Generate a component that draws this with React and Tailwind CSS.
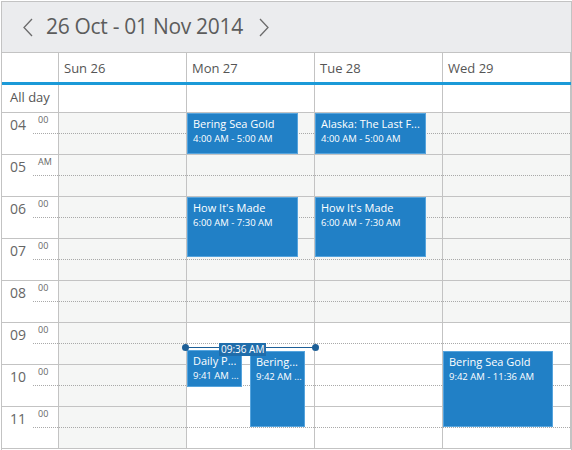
import React from 'react';

const days = [
  { label: 'Sun 26', weekend: true },
  { label: 'Mon 27' },
  { label: 'Tue 28' },
  { label: 'Wed 29' },
];

const hours = [
  { h: '04', m: '00' },
  { h: '05', m: 'AM' },
  { h: '06', m: '00' },
  { h: '07', m: '00' },
  { h: '08', m: '00' },
  { h: '09', m: '00' },
  { h: '10', m: '00' },
  { h: '11', m: '00' },
];

// top/left/width/height in px, relative to the day column body
const events = {
  1: [
    { title: 'Bering Sea Gold', time: '4:00 AM - 5:00 AM', top: 0, left: 0, w: 111, h: 41 },
    { title: "How It's Made", time: '6:00 AM - 7:30 AM', top: 84, left: 0, w: 111, h: 60 },
    { title: 'Daily P...', time: '9:41 AM ...', top: 237, left: 0, w: 55, h: 37 },
    { title: 'Bering...', time: '9:42 AM ...', top: 238, left: 63, w: 55, h: 76 },
  ],
  2: [
    { title: 'Alaska: The Last F...', time: '4:00 AM - 5:00 AM', top: 0, left: 0, w: 111, h: 41 },
    { title: "How It's Made", time: '6:00 AM - 7:30 AM', top: 84, left: 0, w: 111, h: 60 },
  ],
  3: [
    { title: 'Bering Sea Gold', time: '9:42 AM - 11:36 AM', top: 238, left: 0, w: 110, h: 76 },
  ],
};

const Chevron = ({ dir }) => (
  <svg width="12" height="19" viewBox="0 0 12 19" fill="none" stroke="#6b6b6b" strokeWidth="1.3">
    {dir === 'left' ? <path d="M10 1 L2 9.5 L10 18" /> : <path d="M2 1 L10 9.5 L2 18" />}
  </svg>
);

const Event = ({ ev }) => (
  <div
    className="absolute bg-[#2180c6] border border-[#56a4dd] text-white px-[5px] pt-[1px] overflow-hidden whitespace-nowrap"
    style={{ top: ev.top, left: ev.left, width: ev.w, height: ev.h }}
  >
    <div className="text-[11px] leading-[17px]">{ev.title}</div>
    <div className="text-[9.5px] leading-[14px]">{ev.time}</div>
  </div>
);

export default function App() {
  return (
    <div className="w-[572px] h-[450px] bg-white pl-px pt-px overflow-hidden font-['Open_Sans',sans-serif]">
      <div className="w-[571px] h-[449px] border-l border-t border-r border-[#c3c3c3] overflow-hidden">
        {/* toolbar */}
        <div className="h-[51px] bg-[#ebecee] border-b border-[#c3c3c3] flex items-center pl-[20px]">
          <Chevron dir="left" />
          <span className="ml-[12px] text-[21px] text-[#5c5c5c] tracking-[-0.3px]">26 Oct - 01 Nov 2014</span>
          <span className="ml-[15px]"><Chevron dir="right" /></span>
        </div>

        {/* day headers */}
        <div className="flex h-[29px]">
          <div className="w-[57px] border-r border-[#c3c3c3]" />
          {days.map((d) => (
            <div key={d.label} className="w-[128px] border-r border-[#c3c3c3] pl-[5px] pt-[7px] text-[13px] leading-[16px] text-[#555]">
              {d.label}
            </div>
          ))}
        </div>
        <div className="h-[3px] bg-[#1b9ad8]" />

        {/* all day */}
        <div className="flex h-[28px] border-b border-[#c3c3c3]">
          <div className="w-[57px] border-r border-[#c3c3c3] pl-[8px] pt-[3px] text-[13px] leading-[18px] text-[#555]">All day</div>
          {days.map((d) => (
            <div key={d.label} className="w-[128px] border-r border-[#c3c3c3]" />
          ))}
        </div>

        {/* time grid */}
        <div className="relative flex">
          <div className="w-[57px] border-r border-[#c3c3c3] flex flex-col">
            {hours.map((r) => (
              <div key={r.h} className="h-[42px] border-b border-[#c3c3c3] flex">
                <div className="w-[31px] pl-[8px] pt-[3px] text-[14px] leading-[18px] text-[#666]">{r.h}</div>
                <div className="flex-1 h-[21px] border-b border-dotted border-[#a9a9a9] pl-[5px] pt-px text-[9px] leading-[11px] text-[#666]">
                  {r.m}
                </div>
              </div>
            ))}
          </div>

          {days.map((d, i) => (
            <div key={d.label} className="relative w-[128px] border-r border-[#c3c3c3] flex flex-col">
              {hours.map((r, j) => {
                const shaded = d.weekend || j < 5;
                return (
                  <div key={r.h} className={`h-[42px] border-b border-[#c3c3c3] ${shaded ? 'bg-[#f5f6f5]' : 'bg-white'}`}>
                    <div className="h-[21px] border-b border-dotted border-[#a9a9a9]" />
                  </div>
                );
              })}
              {(events[i] || []).map((ev) => (
                <Event key={ev.title + ev.top} ev={ev} />
              ))}
            </div>
          ))}

          {/* current time marker */}
          <div className="absolute left-[183px] top-[234px] w-[131px] h-px bg-[#1d5f97]">
            <div className="absolute -left-[3px] -top-[3px] w-[7px] h-[7px] rounded-full bg-[#1d5f97]" />
            <div className="absolute -right-[3px] -top-[3px] w-[7px] h-[7px] rounded-full bg-[#1d5f97]" />
            <div className="absolute left-[34px] -top-[4px] px-[2px] bg-[#1f6dab] text-white text-[10px] leading-[13px]">09:36 AM</div>
          </div>
        </div>
      </div>
    </div>
  );
}
